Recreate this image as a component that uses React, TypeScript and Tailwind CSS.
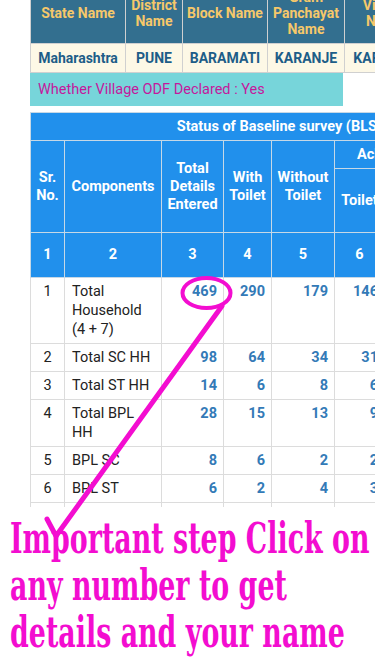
const topHead = ["State Name", "District Name", "Block Name", "Gram Panchayat Name", "Village Name"];
const topRow = ["Maharashtra", "PUNE", "BARAMATI", "KARANJE", "KARANJE"];

const rows = [
  { sr: "1", name: "Total Household (4 + 7)", vals: ["469", "290", "179", "146", "0", "0", "0"] },
  { sr: "2", name: "Total SC HH", vals: ["98", "64", "34", "31", "0", "0", "0"] },
  { sr: "3", name: "Total ST HH", vals: ["14", "6", "8", "6", "0", "0", "0"] },
  { sr: "4", name: "Total BPL HH", vals: ["28", "15", "13", "9", "0", "0", "0"] },
  { sr: "5", name: "BPL SC", vals: ["8", "6", "2", "2", "0", "0", "0"] },
  { sr: "6", name: "BPL ST", vals: ["6", "2", "4", "3", "0", "0", "0"] },
  { sr: "7", name: "Total APL HH", vals: ["441", "275", "166", "137", "0", "0", "0"] },
];

const headCell = "border border-[#c7d8e6] px-[3px] text-center align-middle font-bold text-white";

export default function App() {
  return (
    <div className="relative h-[666px] w-[375px] overflow-hidden bg-white font-['Roboto','Liberation_Sans',sans-serif]">
      <div className="-mt-[18px] pl-[30px]">
        {/* location table */}
        <div className="overflow-hidden">
          <table className="w-[394px] table-fixed border-collapse text-[14px]">
            <colgroup>
              <col className="w-[95px]" />
              <col className="w-[57px]" />
              <col className="w-[85px]" />
              <col className="w-[77px]" />
              <col className="w-[80px]" />
            </colgroup>
            <thead>
              <tr className="h-[61px] bg-[#336f8f]">
                {topHead.map((h) => (
                  <th key={h} className="border border-[#d0d0d0] px-[1px] py-[6px] text-center align-middle font-bold leading-[16px] text-[#f6c86a]">
                    {h}
                  </th>
                ))}
              </tr>
            </thead>
            <tbody>
              <tr className="h-[29px] bg-[#fdf8e6]">
                {topRow.map((v, i) => (
                  <td key={i} className="border border-[#d0d0d0] px-[2px] text-center align-middle font-bold text-[#1d5d88]">
                    {v}
                  </td>
                ))}
              </tr>
            </tbody>
          </table>
        </div>

        <div className="flex h-[33px] w-[313px] items-center bg-[#77d5da] pl-[8px] text-[14.5px] text-[#c4199d]">
          Whether Village ODF Declared : Yes
        </div>

        {/* baseline survey table */}
        <div className="mt-[6px] h-[395px] overflow-hidden">
          <table className="w-[544px] table-fixed border-collapse text-[14.5px]">
            <colgroup>
              <col className="w-[34px]" />
              <col className="w-[97px]" />
              <col className="w-[62px]" />
              <col className="w-[48px]" />
              <col className="w-[63px]" />
              <col className="w-[50px]" />
              <col className="w-[64px]" />
              <col className="w-[64px]" />
              <col className="w-[62px]" />
            </colgroup>
            <thead className="bg-[#2190ec] leading-[18px]">
              <tr className="h-[28px]">
                <th colSpan={9} className={headCell}>
                  Status of Baseline survey (BLS) - 2012
                </th>
              </tr>
              <tr className="h-[28px]">
                <th rowSpan={2} className={headCell}>Sr. No.</th>
                <th rowSpan={2} className={headCell}>Components</th>
                <th rowSpan={2} className={headCell}>Total Details Entered</th>
                <th rowSpan={2} className={headCell}>With Toilet</th>
                <th rowSpan={2} className={headCell}>Without Toilet</th>
                <th colSpan={4} className="border border-[#c7d8e6] pl-[22px] text-left align-middle font-bold text-white">
                  Achievement after BLS
                </th>
              </tr>
              <tr className="h-[64px]">
                <th className={headCell}>Toilet</th>
                <th className={headCell}>Functional</th>
                <th className={headCell}>Defunct</th>
                <th className={headCell}>Total</th>
              </tr>
              <tr className="h-[45px]">
                {["1", "2", "3", "4", "5", "6", "7", "8", "9"].map((n) => (
                  <th key={n} className={headCell}>{n}</th>
                ))}
              </tr>
            </thead>
            <tbody className="leading-[19px] text-[#222]">
              {rows.map((r) => (
                <tr key={r.sr}>
                  <td className="border border-[#dcdcdc] py-[4px] text-center align-top">{r.sr}</td>
                  <td className="border border-[#dcdcdc] py-[4px] pl-[7px] pr-[9px] align-top">{r.name}</td>
                  {r.vals.map((v, i) => (
                    <td key={i} className="border border-[#dcdcdc] py-[4px] pr-[6px] text-right align-top font-bold text-[#337ab7]">
                      {v}
                    </td>
                  ))}
                </tr>
              ))}
            </tbody>
          </table>
        </div>
      </div>

      <div className="mt-[8px] pl-[10px] font-['DejaVu_Serif','Liberation_Serif',serif] text-[42px] font-bold leading-[47px] text-[#f30dd0]">
        <div className="origin-left scale-x-[0.64] whitespace-nowrap">
          Important step Click on
          <br />
          any number to get
          <br />
          details and your name
        </div>
      </div>

      {/* hand-drawn annotation */}
      <svg className="pointer-events-none absolute left-0 top-0" width="375" height="666" viewBox="0 0 375 666">
        <ellipse cx="206.5" cy="293" rx="24" ry="15" fill="none" stroke="#f30dd0" strokeWidth="4" />
        <polyline points="47,519 56,536 222,306" fill="none" stroke="#f30dd0" strokeWidth="5" strokeLinejoin="round" strokeLinecap="round" />
      </svg>
    </div>
  );
}
